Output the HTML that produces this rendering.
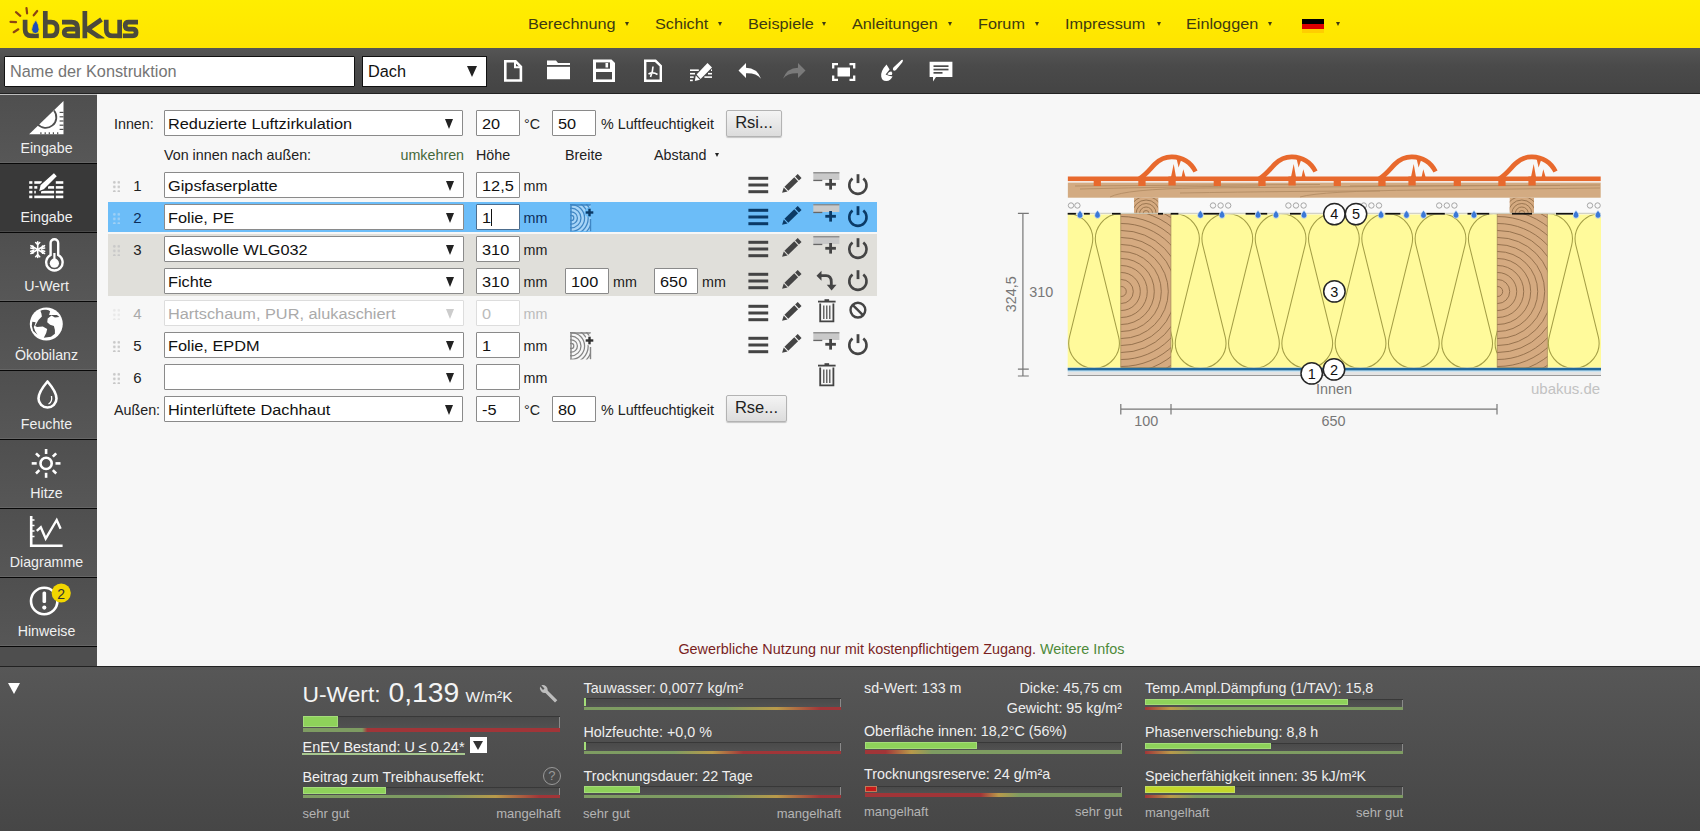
<!DOCTYPE html>
<html><head><meta charset="utf-8">
<style>
*{box-sizing:border-box;margin:0;padding:0}
html,body{width:1700px;height:831px;overflow:hidden;background:#f7f7f7;font-family:"Liberation Sans",sans-serif;color:#222}
.a{position:absolute}
#hdr{left:0;top:0;width:1700px;height:48px;background:linear-gradient(#ffee00,#ffe400)}
#hdr .m{position:absolute;top:16px;font-size:14.5px;line-height:1.15;color:#3e3a12;white-space:nowrap;transform-origin:0 50%;transform:scaleX(1.12)}
#hdr .t{position:absolute;top:22px;width:0;height:0;border-left:2.5px solid transparent;border-right:2.5px solid transparent;border-top:4px solid #3e3a12}
#tb{left:0;top:48px;width:1700px;height:46px;background:linear-gradient(#555 0,#4a4a4a 40%,#444 100%);border-bottom:1px solid #222}
#side{left:0;top:94px;width:97px;height:572px;background:#4e4e4e;border-top:1px solid #bdbdbd}
.si{position:absolute;left:0;width:97px;height:69px;background:linear-gradient(#4f4f4f,#575757);border-bottom:1px solid #080808;box-shadow:inset 0 -1px 0 #656565}
.si span{position:absolute;left:0;width:93px;text-align:center;top:45px;font-size:14.2px;color:#f0f0f0}
.si.act{background:#393939;box-shadow:inset 0 -1px 0 #4a4a4a}
#bot{left:0;top:666px;width:1700px;height:165px;background:linear-gradient(#575757,#464646)}
.lbl{position:absolute;font-size:14.4px;white-space:nowrap;color:#222}
.mm{position:absolute;font-size:15px;white-space:nowrap;color:#222}
.num{position:absolute;font-size:15px;color:#222;width:20px;text-align:center}
.btn{position:absolute;height:27px;border:1px solid #b3b3b3;border-radius:2px;background:linear-gradient(#f4f4f4,#dcdcdc);font-size:16px;text-align:center;line-height:25px;color:#222;box-shadow:0 1px 1px rgba(0,0,0,.2)}

.v{display:inline-block;transform-origin:0 50%;transform:scaleX(1.165)}
.sel,.inp{position:absolute;height:26px;background:#fff;border:1px solid #8a8a8a;border-radius:1px;white-space:nowrap;color:#111}
.sel .tx,.inp .tx{position:absolute;left:3px;top:5px;font-size:14px;line-height:16px}
.sel .ar{position:absolute;right:9.5px;top:8px;border-left:4.3px solid transparent;border-right:4.3px solid transparent;border-top:10px solid #222}
.lb{position:absolute;font-size:14.3px;line-height:16px;white-space:nowrap;color:#222}
.dots{position:absolute;width:8px;height:12px;background-image:radial-gradient(circle,#c8c8c8 1.2px,transparent 1.4px);background-size:4.6px 4.6px}
</style></head><body>
<div id="hdr" class="a">
<svg class="a" style="left:0;top:0" width="150" height="48" viewBox="0 0 150 48">
<defs><clipPath id="lc"><rect x="0" y="10.8" width="150" height="27.6"/></clipPath></defs>
<g stroke="#8c4612" stroke-width="2.2" stroke-linecap="round">
<line x1="10.5" y1="21.8" x2="16" y2="22.2"/><line x1="13.7" y1="32.2" x2="18.3" y2="29.3"/><line x1="16" y1="12.2" x2="20.3" y2="15.8"/><line x1="26.5" y1="8.2" x2="27.1" y2="13.3"/><line x1="37.2" y1="11" x2="33.7" y2="15.3"/></g>
<g fill="none" stroke="#4b4a3c" stroke-width="4.7" clip-path="url(#lc)">
<path d="M25.1,19.7 V29.5 Q25.1,35.85 31.5,35.85 H38.8"/>
<path d="M45.3,11 V35.85 H51 Q57.05,35.85 57.05,29.8 V28.1 Q57.05,22.05 51,22.05 H45.3"/>
<path d="M62,22.05 H71.5 Q77.6,22.05 77.6,28 V38.4 M77.6,29.2 H69.2 Q64.2,29.2 64.2,32.5 Q64.2,35.85 69.2,35.85 H77.6"/>
<path d="M84.85,11 V38.4 M101.5,19.5 L87.5,29.2 L103.5,40"/>
<path d="M106.25,19.7 V29.5 Q106.25,35.85 112.5,35.85 H119.65 M119.65,19.7 V38.4"/>
<path d="M138,22.05 H128.6 Q125.2,22.05 125.2,25.6 Q125.2,29.2 128.6,29.2 H132.6 Q136.1,29.2 136.1,32.5 Q136.1,35.85 132.6,35.85 H122.8"/>
</g>
<path d="M36,19.8 Q31.5,25.5 31.6,29.6 Q31.9,33.6 35.4,33.6 Q39.2,33.4 39.1,29.3 Q38.9,24.8 36,19.8Z" fill="#1c4db8" stroke="#ffe800" stroke-width="0.8"/>
</svg>
  <div class="m" style="left:528px">Berechnung</div><div class="t" style="left:625px"></div>
  <div class="m" style="left:655px">Schicht</div><div class="t" style="left:718px"></div>
  <div class="m" style="left:748px">Beispiele</div><div class="t" style="left:822px"></div>
  <div class="m" style="left:852px">Anleitungen</div><div class="t" style="left:948px"></div>
  <div class="m" style="left:978px">Forum</div><div class="t" style="left:1035px"></div>
  <div class="m" style="left:1065px">Impressum</div><div class="t" style="left:1157px"></div>
  <div class="m" style="left:1186px">Einloggen</div><div class="t" style="left:1268px"></div>
  <div class="a" style="left:1302px;top:19px;width:22px;height:5px;background:#000"></div>
  <div class="a" style="left:1302px;top:24px;width:22px;height:5px;background:#dd0000"></div>
  <div class="a" style="left:1302px;top:29px;width:22px;height:4px;background:#ffce00"></div>
  <div class="t" style="left:1336px"></div>
</div>
<div id="tb" class="a">
<div class="a" style="left:4px;top:8px;width:351px;height:31px;background:#fff;border:1px solid #111;border-radius:1px"></div>
<div class="a" style="left:10px;top:14px;font-size:16.3px;color:#757575;white-space:nowrap">Name der Konstruktion</div>
<div class="a" style="left:362px;top:8px;width:125px;height:31px;background:#fff;border:1px solid #111"></div>
<div class="a" style="left:368px;top:14px;font-size:16.3px;color:#111">Dach</div>
<div class="a" style="left:467px;top:18px;border-left:5.5px solid transparent;border-right:5.5px solid transparent;border-top:11px solid #222"></div>
<svg class="a" style="left:0;top:0" width="1000" height="47" viewBox="0 48 1000 47">
<g fill="none" stroke="#fff" stroke-width="2.6">
<path d="M505.3,61.3 H515.5 L520.9,66.7 V80.5 H505.3 Z"/>
<path d="M515,61.3 V67.2 H520.9" stroke-width="2"/>
</g>
<path d="M547,60.6 H556 L558,63 H570 V79.2 H547 Z M547,65.5 V66.5 H570 V65.5Z" fill="#fff"/>
<rect x="547" y="65" width="23" height="1.6" fill="#4a4a4a"/>
<path d="M593,59.6 H611.5 L615,63 V82 H593 Z" fill="#fff"/>
<rect x="596" y="62.4" width="14" height="6.3" fill="#4a4a4a"/><rect x="605.5" y="63" width="2.6" height="4.5" fill="#fff"/>
<rect x="596" y="72" width="16" height="7.4" fill="#4a4a4a"/>
<g fill="none" stroke="#fff" stroke-width="2.4">
<path d="M645.2,60.8 H655.5 L660.8,66 V80.8 H645.2 Z"/>
<path d="M650.5,77 Q653,71 653,66.5 M648.5,74 Q653,71.5 657.5,74.5" stroke-width="1.6"/>
</g>
<g fill="#fff">
<rect x="690" y="69.4" width="8.8" height="1.6"/>
<rect x="690" y="72.9" width="5" height="1.6"/><rect x="708" y="72.9" width="4" height="1.6"/>
<rect x="690" y="76.3" width="3.7" height="1.6"/><rect x="704.4" y="76.3" width="7.6" height="1.6"/>
<rect x="690" y="79.6" width="2.8" height="1.6"/><rect x="711" y="69.4" width="1" height="1.6"/>
<path d="M707.5,62.9 L712,67.4 L700.6,78.9 L696.6,74.5 Z"/>
<path d="M694.8,81 L695.8,75.6 L700,79.8 Z"/>
</g>
<path d="M738.5,70.5 L746,63 V67.8 Q757,68 761,78.7 Q756,72.8 746,73.3 V78 Z" fill="#fff"/>
<path d="M805.5,70.5 L798,63 V67.8 Q787,68 783,78.7 Q788,72.8 798,73.3 V78 Z" fill="#7a7a7a"/>
<g fill="none" stroke="#fff" stroke-width="2.3">
<path d="M833.2,68.5 V64.2 H838 M849.5,64.2 H854.2 V68.5 M854.2,75.5 V79.8 H849.5 M838,79.8 H833.2 V75.5"/>
</g>
<rect x="837.5" y="67.5" width="12.5" height="9" fill="#fff"/>
<path d="M902.6,59.8 Q903.6,60.6 902.2,62.6 L896,70 Q894.2,71.2 893.2,70.2 Q892.4,69.2 893.4,67.6 L900.4,61 Q901.8,59.4 902.6,59.8 Z" fill="#fff"/>
<path d="M886.5,64.6 Q880.6,71 881.2,76.5 Q882,81.2 886.5,81 Q890.6,80.6 892.6,76.4 Q888.8,76.4 885.6,74.6 L889.6,69.6 Z" fill="#fff"/>
<path d="M887.2,74.2 Q889.2,71.2 891.4,71.6 Q893,72.8 891.8,75 Q889.6,75.4 887.2,74.2 Z" fill="#fff"/>
<path d="M929.6,61.8 H952.4 V77 H936 L933,81.6 V77 H929.6 Z" fill="#fff"/>
<rect x="933.5" y="65.3" width="15" height="1.7" fill="#4a4a4a"/><rect x="933.5" y="68.7" width="15" height="1.7" fill="#4a4a4a"/><rect x="933.5" y="72" width="9" height="1.7" fill="#4a4a4a"/>
</svg>
</div>
<div id="side" class="a">
  <div class="si" style="top:0"><span>Eingabe</span></div>
  <div class="si act" style="top:69px"><span>Eingabe</span></div>
  <div class="si" style="top:138px"><span>U-Wert</span></div>
  <div class="si" style="top:207px"><span>Ökobilanz</span></div>
  <div class="si" style="top:276px"><span>Feuchte</span></div>
  <div class="si" style="top:345px"><span>Hitze</span></div>
  <div class="si" style="top:414px"><span>Diagramme</span></div>
  <div class="si" style="top:483px"><span>Hinweise</span></div>
<svg class="a" style="left:0;top:0" width="97" height="571" viewBox="0 95 97 571">
<path d="M29.1,134.3 L63.5,100.9 V134.3 Z" fill="#fff"/>
<path d="M37.5,124 A10.66,10.66 0 0 0 54,110.5" fill="none" stroke="#4f4f4f" stroke-width="1.8"/>
<g stroke="#4f4f4f" stroke-width="1.2">
<line x1="59.6" y1="112.4" x2="63.5" y2="112.4"/><line x1="59.6" y1="116.8" x2="63.5" y2="116.8"/><line x1="59.6" y1="121" x2="63.5" y2="121"/><line x1="59.6" y1="125.2" x2="63.5" y2="125.2"/><line x1="59.6" y1="129.4" x2="63.5" y2="129.4"/>
<line x1="40.9" y1="132.2" x2="40.9" y2="134.3"/><line x1="45.2" y1="132.2" x2="45.2" y2="134.3"/><line x1="49.3" y1="132.2" x2="49.3" y2="134.3"/><line x1="53.4" y1="132.2" x2="53.4" y2="134.3"/><line x1="57.7" y1="132.2" x2="57.7" y2="134.3"/>
</g>
<g fill="#fff">
<rect x="29.2" y="181.2" width="3.2" height="2.6"/><rect x="29.2" y="186.1" width="3.2" height="2.6"/><rect x="29.2" y="190.8" width="3.2" height="2.6"/><rect x="29.2" y="195.6" width="3.2" height="2.6"/>
<rect x="34.3" y="181.2" width="7.5" height="2.6"/><rect x="55.8" y="181.2" width="7.5" height="2.6"/>
<rect x="34.3" y="186.1" width="3" height="2.6"/><rect x="48" y="186.1" width="6.1" height="2.6"/><rect x="55.8" y="186.1" width="7.5" height="2.6"/>
<rect x="34.3" y="190.8" width="1.5" height="2.6"/><rect x="41" y="190.8" width="13.1" height="2.6"/><rect x="55.8" y="190.8" width="7.5" height="2.6"/>
<rect x="34.3" y="195.6" width="19.8" height="2.6"/><rect x="55.8" y="195.6" width="7.5" height="2.6"/>
<path d="M38.3,192 L40,184.8 L54,172.2 L57.7,176.2 L44.5,189.5 Z" stroke="#383838" stroke-width="1.3"/>
</g>
<g stroke="#fff" stroke-width="1.6" stroke-linecap="round">
<line x1="37.7" y1="241.8" x2="37.7" y2="257.4"/><line x1="30.9" y1="245.7" x2="44.5" y2="253.5"/><line x1="30.9" y1="253.5" x2="44.5" y2="245.7"/>
<path d="M35.7,242.5 L37.7,244.5 L39.7,242.5 M35.7,256.7 L37.7,254.7 L39.7,256.7 M30.8,248 L33.5,248.8 L32.8,246 M44.6,251.2 L41.9,250.4 L42.6,253.2 M30.8,251.2 L33.5,250.4 L32.8,253.2 M44.6,248 L41.9,248.8 L42.6,246" fill="none"/>
</g>
<path d="M50.6,255 V243 A3.8,3.8 0 0 1 58.2,243 V255 A8.2,8.2 0 1 1 50.6,255 Z" fill="none" stroke="#fff" stroke-width="2.4"/>
<circle cx="54.4" cy="263.2" r="4.6" fill="#fff"/><rect x="53.3" y="253" width="2.2" height="8" fill="#fff"/>
<circle cx="46.3" cy="324" r="16.5" fill="#fff"/>
<path d="M40.4,310.7 Q43,309.4 46.2,309.8 Q49,310.2 50.1,311.2 L49.1,315.1 L52,315.1 L56.8,315.1 Q58.6,316 59.2,317 L54.9,317.5 L51.5,315.6 L47.7,318.4 L47.2,322.3 L50.1,324.7 L53.9,326.1 L54.9,330 L54.9,333.8 L51,336.7 L43.8,337.7 L46.2,332.9 L47.2,329 L42.8,326.6 L37.1,327.1 L35.1,326.1 L36.6,323.3 L38.5,319.9 L41.9,316.5 L41.4,313.6 Z" fill="#4f4f4f"/>
<path d="M32.3,321.8 L35.6,322.3 L34.7,325.2 L33.7,327.1 L35.1,331 L37.6,334.8 L33.2,331 L31.8,325.7 Z" fill="#4f4f4f"/>
<path d="M47.5,381.5 Q38.5,392 38.5,398.5 A9,9 0 0 0 56.5,398.5 Q56.5,392 47.5,381.5 Z" fill="none" stroke="#fff" stroke-width="2.6" stroke-linejoin="round"/>
<path d="M51.5,396 Q52.5,402 48.5,404" fill="none" stroke="#fff" stroke-width="1.3"/>
<circle cx="46.1" cy="463.4" r="5.6" fill="none" stroke="#fff" stroke-width="2.6"/>
<g stroke="#fff" stroke-width="2.6">
<line x1="46.1" y1="449" x2="46.1" y2="454"/><line x1="46.1" y1="472.8" x2="46.1" y2="477.8"/><line x1="31.7" y1="463.4" x2="36.7" y2="463.4"/><line x1="55.5" y1="463.4" x2="60.5" y2="463.4"/>
<line x1="36" y1="453.3" x2="39.4" y2="456.7"/><line x1="52.8" y1="470.1" x2="56.2" y2="473.5"/><line x1="36" y1="473.5" x2="39.4" y2="470.1"/><line x1="52.8" y1="456.7" x2="56.2" y2="453.3"/>
</g>
<path d="M31.2,516 V545.7 H62.6" fill="none" stroke="#fff" stroke-width="2.6"/>
<g stroke="#fff" stroke-width="1.5"><line x1="31" y1="520" x2="34.5" y2="520"/><line x1="31" y1="525.5" x2="34.5" y2="525.5"/><line x1="31" y1="531" x2="34.5" y2="531"/><line x1="31" y1="536.5" x2="34.5" y2="536.5"/></g>
<path d="M36.8,530.8 L40.8,527.2 L45.7,538.5 L56.7,520 L60.6,528.8" fill="none" stroke="#fff" stroke-width="2.4" stroke-linejoin="miter"/>
<circle cx="44.2" cy="601" r="13.2" fill="none" stroke="#fff" stroke-width="2.6"/>
<rect x="42.5" y="591.5" width="3.6" height="11.5" rx="1.5" fill="#fff"/><circle cx="44.3" cy="607.6" r="2.1" fill="#fff"/>
<circle cx="61.2" cy="593" r="9.6" fill="#f2d600"/>
<text x="61.2" y="598.6" font-size="14" text-anchor="middle" fill="#333" font-family="Liberation Sans">2</text>
</svg>
</div>
<div id="form">
<div class="a" style="left:108px;top:202px;width:769px;height:30px;background:#6cbdf8"></div>
<div class="a" style="left:108px;top:234px;width:769px;height:62px;background:#e0dfda"></div>
<div class="lb" style="left:114px;top:116.0px;color:#222;font-size:14.3px">Innen:</div>
<div class="sel" style="left:164px;top:110px;width:299px;border-color:#8a8a8a;"><span class="tx" style="color:#111"><span class="v">Reduzierte Luftzirkulation</span></span><span class="ar" style="border-top-color:#222"></span></div>
<div class="inp" style="left:476px;top:110px;width:44px;border-color:#8a8a8a;"><span class="tx" style="left:5px;color:#111"><span class="v">20</span></span></div>
<div class="lb" style="left:524px;top:116.0px;color:#222;font-size:14.3px">°C</div>
<div class="inp" style="left:552px;top:110px;width:44px;border-color:#8a8a8a;"><span class="tx" style="left:5px;color:#111"><span class="v">50</span></span></div>
<div class="lb" style="left:601px;top:116.0px;color:#222;font-size:14.3px">% Luftfeuchtigkeit</div>
<div class="btn" style="left:726px;top:110px;width:56px;height:27px;font-size:16.5px;line-height:22px">Rsi...</div>
<div class="lb" style="left:164px;top:147.4px;color:#222;font-size:14.3px">Von innen nach außen:</div>
<div class="lb" style="left:400.5px;top:147.4px;color:#44683a;font-size:14.3px">umkehren</div>
<div class="lb" style="left:476px;top:147.4px;color:#222;font-size:14.3px">Höhe</div>
<div class="lb" style="left:565px;top:147.4px;color:#222;font-size:14.3px">Breite</div>
<div class="lb" style="left:654px;top:147.4px;color:#222;font-size:14.3px">Abstand</div>
<div class="a" style="left:715px;top:153px;border-left:2.5px solid transparent;border-right:2.5px solid transparent;border-top:4px solid #222"></div>
<div class="dots" style="left:112px;top:180px;background-image:radial-gradient(circle,#c8c8c8 1.2px,transparent 1.4px)"></div>
<div class="lb" style="left:130px;width:15px;text-align:center;top:177.5px;font-size:15px;color:#222">1</div>
<div class="sel" style="left:164px;top:172px;width:300px;border-color:#8a8a8a;"><span class="tx" style="color:#111"><span class="v">Gipsfaserplatte</span></span><span class="ar" style="border-top-color:#222"></span></div>
<div class="inp" style="left:476px;top:172px;width:44px;border-color:#8a8a8a;"><span class="tx" style="left:5px;color:#111"><span class="v">12,5</span></span></div>
<div class="lb" style="left:523.5px;top:177.5px;color:#222;font-size:14.3px">mm</div>
<div class="dots" style="left:112px;top:212px;background-image:radial-gradient(circle,#9fd0f5 1.2px,transparent 1.4px)"></div>
<div class="lb" style="left:130px;width:15px;text-align:center;top:209.5px;font-size:15px;color:#0b2d5a">2</div>
<div class="sel" style="left:164px;top:204px;width:300px;border-color:#8a8a8a;"><span class="tx" style="color:#111"><span class="v">Folie, PE</span></span><span class="ar" style="border-top-color:#222"></span></div>
<div class="inp" style="left:476px;top:204px;width:44px;border-color:#8a8a8a;border-color:#4d6d8d;"><span class="tx" style="left:5px;color:#111"><span class="v">1</span></span></div>
<div class="lb" style="left:523.5px;top:209.5px;color:#0b2d5a;font-size:14.3px">mm</div>
<div class="dots" style="left:112px;top:244px;background-image:radial-gradient(circle,#c8c8c8 1.2px,transparent 1.4px)"></div>
<div class="lb" style="left:130px;width:15px;text-align:center;top:241.5px;font-size:15px;color:#222">3</div>
<div class="sel" style="left:164px;top:236px;width:300px;border-color:#8a8a8a;"><span class="tx" style="color:#111"><span class="v">Glaswolle WLG032</span></span><span class="ar" style="border-top-color:#222"></span></div>
<div class="inp" style="left:476px;top:236px;width:44px;border-color:#8a8a8a;"><span class="tx" style="left:5px;color:#111"><span class="v">310</span></span></div>
<div class="lb" style="left:523.5px;top:241.5px;color:#222;font-size:14.3px">mm</div>
<div class="sel" style="left:164px;top:268px;width:300px;border-color:#8a8a8a;"><span class="tx" style="color:#111"><span class="v">Fichte</span></span><span class="ar" style="border-top-color:#222"></span></div>
<div class="inp" style="left:476px;top:268px;width:44px;border-color:#8a8a8a;"><span class="tx" style="left:5px;color:#111"><span class="v">310</span></span></div>
<div class="lb" style="left:523.5px;top:273.5px;color:#222;font-size:14.3px">mm</div>
<div class="dots" style="left:112px;top:308px;background-image:radial-gradient(circle,#e8e8e8 1.2px,transparent 1.4px)"></div>
<div class="lb" style="left:130px;width:15px;text-align:center;top:305.5px;font-size:15px;color:#aaa">4</div>
<div class="sel" style="left:164px;top:300px;width:300px;border-color:#ddd;"><span class="tx" style="color:#aaa"><span class="v">Hartschaum, PUR, alukaschiert</span></span><span class="ar" style="border-top-color:#ccc"></span></div>
<div class="inp" style="left:476px;top:300px;width:44px;border-color:#ddd;"><span class="tx" style="left:5px;color:#bbb"><span class="v">0</span></span></div>
<div class="lb" style="left:523.5px;top:305.5px;color:#bbb;font-size:14.3px">mm</div>
<div class="dots" style="left:112px;top:340px;background-image:radial-gradient(circle,#c8c8c8 1.2px,transparent 1.4px)"></div>
<div class="lb" style="left:130px;width:15px;text-align:center;top:337.5px;font-size:15px;color:#222">5</div>
<div class="sel" style="left:164px;top:332px;width:300px;border-color:#8a8a8a;"><span class="tx" style="color:#111"><span class="v">Folie, EPDM</span></span><span class="ar" style="border-top-color:#222"></span></div>
<div class="inp" style="left:476px;top:332px;width:44px;border-color:#8a8a8a;"><span class="tx" style="left:5px;color:#111"><span class="v">1</span></span></div>
<div class="lb" style="left:523.5px;top:337.5px;color:#222;font-size:14.3px">mm</div>
<div class="dots" style="left:112px;top:372px;background-image:radial-gradient(circle,#c8c8c8 1.2px,transparent 1.4px)"></div>
<div class="lb" style="left:130px;width:15px;text-align:center;top:369.5px;font-size:15px;color:#222">6</div>
<div class="sel" style="left:164px;top:364px;width:300px;border-color:#8a8a8a;"><span class="tx" style="color:#111"><span class="v"></span></span><span class="ar" style="border-top-color:#222"></span></div>
<div class="inp" style="left:476px;top:364px;width:44px;border-color:#8a8a8a;"><span class="tx" style="left:5px;color:#111"><span class="v"></span></span></div>
<div class="lb" style="left:523.5px;top:369.5px;color:#222;font-size:14.3px">mm</div>
<div class="a" style="left:491px;top:209px;width:1px;height:17px;background:#111"></div>
<div class="inp" style="left:565px;top:268px;width:44px;border-color:#8a8a8a;"><span class="tx" style="left:5px;color:#111"><span class="v">100</span></span></div>
<div class="lb" style="left:613px;top:273.5px;color:#222;font-size:14.3px">mm</div>
<div class="inp" style="left:654px;top:268px;width:44px;border-color:#8a8a8a;"><span class="tx" style="left:5px;color:#111"><span class="v">650</span></span></div>
<div class="lb" style="left:702px;top:273.5px;color:#222;font-size:14.3px">mm</div>
<div class="lb" style="left:114px;top:402.0px;color:#222;font-size:14.3px">Außen:</div>
<div class="sel" style="left:164px;top:396px;width:299px;border-color:#8a8a8a;"><span class="tx" style="color:#111"><span class="v">Hinterlüftete Dachhaut</span></span><span class="ar" style="border-top-color:#222"></span></div>
<div class="inp" style="left:476px;top:396px;width:44px;border-color:#8a8a8a;"><span class="tx" style="left:5px;color:#111"><span class="v">-5</span></span></div>
<div class="lb" style="left:524px;top:402.0px;color:#222;font-size:14.3px">°C</div>
<div class="inp" style="left:552px;top:396px;width:44px;border-color:#8a8a8a;"><span class="tx" style="left:5px;color:#111"><span class="v">80</span></span></div>
<div class="lb" style="left:601px;top:402.0px;color:#222;font-size:14.3px">% Luftfeuchtigkeit</div>
<div class="btn" style="left:726px;top:395px;width:61px;height:27px;font-size:16.5px;line-height:22px">Rse...</div>
<svg width="0" height="0" style="position:absolute">
<defs>
<g id="ham"><rect x="8.4" y="-8.2" width="19.8" height="3"/><rect x="8.4" y="-1.5" width="19.8" height="3"/><rect x="8.4" y="5.2" width="19.8" height="3"/></g>
<g id="pen"><g transform="translate(50.85,-0.6) rotate(-44)"><path d="M-12.2,0 L-7.2,-2.75 V2.75 Z"/><rect x="-6.2" y="-2.75" width="13.6" height="5.5"/><rect x="8.6" y="-2.75" width="3.6" height="5.5"/></g></g>
<g id="pow"><path d="M112.5,-6.4 A8.6,8.6 0 1 0 123.3,-6.4" fill="none" stroke-width="2.6" stroke="currentColor"/><rect x="116.6" y="-10.8" width="2.8" height="8.9"/></g>
<g id="lay"><rect x="73.3" y="-12.6" width="26.1" height="7.6" fill="#c9c9c9"/><rect x="73.3" y="-12.9" width="26.1" height="1.3" fill="#777" opacity=".8"/><rect x="73.3" y="-5.2" width="9" height="1.3" fill="#666"/><circle cx="90.6" cy="-1" r="6.5" fill="#f7f7f7" opacity=".0"/><rect x="85.3" y="-2.1" width="10.6" height="2.8"/><rect x="89.2" y="-6" width="2.8" height="10.6"/></g>
</defs></svg>
<svg class="a" style="left:740px;top:169px;color:#444" width="140" height="32" viewBox="0 -16 140 32" fill="#444"><use href="#ham"/><use href="#pen"/><use href="#lay"/><use href="#pow"/></svg>
<svg class="a" style="left:740px;top:201px;color:#0b3a66" width="140" height="32" viewBox="0 -16 140 32" fill="#0b3a66"><use href="#ham"/><use href="#pen"/><use href="#lay"/><use href="#pow"/></svg>
<svg class="a" style="left:740px;top:233px;color:#444" width="140" height="32" viewBox="0 -16 140 32" fill="#444"><use href="#ham"/><use href="#pen"/><use href="#lay"/><use href="#pow"/></svg>
<svg class="a" style="left:740px;top:265px;color:#444" width="140" height="32" viewBox="0 -16 140 32" fill="#444"><use href="#ham"/><use href="#pen"/><use href="#pow"/></svg>
<svg class="a" style="left:740px;top:329px;color:#444" width="140" height="32" viewBox="0 -16 140 32" fill="#444"><use href="#ham"/><use href="#pen"/><use href="#lay"/><use href="#pow"/></svg>
<svg class="a" style="left:740px;top:297px;color:#444" width="140" height="32" viewBox="0 -16 140 32" fill="#444"><use href="#ham"/><use href="#pen"/></svg>
<svg class="a" style="left:740px;top:265px" width="140" height="32" viewBox="0 -16 140 32" fill="#444">
<path d="M80,-5.3 H86 Q91.3,-5.3 91.3,1 V4.5" fill="none" stroke="#444" stroke-width="2.8"/>
<path d="M76.5,-5.3 L81.5,-10.3 V-0.3 Z"/><path d="M86.8,3.8 H96.5 L91.6,9.6 Z"/>
</svg>
<svg class="a" style="left:740px;top:296.5px" width="140" height="32" viewBox="0 -16 140 32" fill="#444">
<rect x="78" y="-12.3" width="17.6" height="1.8"/><rect x="84.5" y="-13.8" width="4.6" height="2"/>
<path d="M80.2,-9.5 V8.3 H93.4 V-9.5" fill="none" stroke="#444" stroke-width="1.8"/>
<rect x="83.2" y="-7.5" width="1.2" height="13.5"/><rect x="86.2" y="-7.5" width="1.2" height="13.5"/><rect x="89.2" y="-7.5" width="1.2" height="13.5"/>
</svg>
<svg class="a" style="left:740px;top:297.5px" width="140" height="32" viewBox="0 -16 140 32">
<circle cx="117.9" cy="-3.9" r="7.4" fill="none" stroke="#444" stroke-width="2.4"/><line x1="112.6" y1="-9.2" x2="123.2" y2="1.4" stroke="#444" stroke-width="2.4"/>
</svg>
<svg class="a" style="left:740px;top:361px" width="140" height="32" viewBox="0 -16 140 32" fill="#444">
<rect x="78" y="-12.3" width="17.6" height="1.8"/><rect x="84.5" y="-13.8" width="4.6" height="2"/>
<path d="M80.2,-9.5 V8.3 H93.4 V-9.5" fill="none" stroke="#444" stroke-width="1.8"/>
<rect x="83.2" y="-7.5" width="1.2" height="13.5"/><rect x="86.2" y="-7.5" width="1.2" height="13.5"/><rect x="89.2" y="-7.5" width="1.2" height="13.5"/>
</svg>
<svg class="a" style="left:570px;top:204px" width="30" height="28" viewBox="0 0 30 28">
<defs><clipPath id="wc204"><rect x="0" y="0" width="21" height="27.5"/></clipPath></defs><rect x="1" y="1" width="19.5" height="26" fill="#a6d4f7"/>
<g clip-path="url(#wc204)" fill="none" stroke="#3f86c4" stroke-width="1.25"><circle cx="1.2" cy="14" r="2.6"/><circle cx="1.2" cy="14" r="6.2"/><circle cx="1.2" cy="14" r="9.8"/><circle cx="1.2" cy="14" r="13.4"/><circle cx="1.2" cy="14" r="17"/><circle cx="1.2" cy="14" r="20.6"/><circle cx="1.2" cy="14" r="24.2"/></g>
<path d="M1,27 V1 H20.5 M20.5,15 V27" fill="none" stroke="#3f86c4" stroke-width="1.4"/>
<circle cx="19.5" cy="8.5" r="5" fill="#6cbdf8"/>
<rect x="15.7" y="7.3" width="7.6" height="2.4" fill="#0b3a66"/><rect x="18.3" y="4.7" width="2.4" height="7.6" fill="#0b3a66"/>
</svg>
<svg class="a" style="left:570px;top:332px" width="30" height="28" viewBox="0 0 30 28">
<defs><clipPath id="wc332"><rect x="0" y="0" width="21" height="27.5"/></clipPath></defs>
<g clip-path="url(#wc332)" fill="none" stroke="#858585" stroke-width="1.25"><circle cx="1.2" cy="14" r="2.6"/><circle cx="1.2" cy="14" r="6.2"/><circle cx="1.2" cy="14" r="9.8"/><circle cx="1.2" cy="14" r="13.4"/><circle cx="1.2" cy="14" r="17"/><circle cx="1.2" cy="14" r="20.6"/><circle cx="1.2" cy="14" r="24.2"/></g>
<path d="M1,27 V1 H20.5 M20.5,15 V27" fill="none" stroke="#858585" stroke-width="1.4"/>
<circle cx="19.5" cy="8.5" r="5" fill="#f7f7f7"/>
<rect x="15.7" y="7.3" width="7.6" height="2.4" fill="#333"/><rect x="18.3" y="4.7" width="2.4" height="7.6" fill="#333"/>
</svg>
</div>
<svg class="a" style="left:990px;top:140px" width="650" height="300" viewBox="990 140 650 300">
<defs><clipPath id="ins"><rect x="1067.7" y="214.5" width="533.3" height="153"/></clipPath>
<clipPath id="r1"><rect x="1120.8" y="213.7" width="50" height="153.7"/></clipPath><clipPath id="r2"><rect x="1497.2" y="213.7" width="50.1" height="153.7"/></clipPath>
<clipPath id="cb1"><rect x="1134" y="197.7" width="24.2" height="16"/></clipPath><clipPath id="cb2"><rect x="1509.7" y="197.7" width="24.3" height="16"/></clipPath>
<clipPath id="lat"><rect x="1067.7" y="182.6" width="533" height="15.1"/></clipPath></defs>
<rect x="1067.7" y="214.5" width="533.3" height="153" fill="#fffa9b"/>
<g clip-path="url(#ins)" fill="none" stroke="#a49e46" stroke-width="1.05"><path d="M936.22,245.01 A25.3,25.3 0 1 1 985.38,245.01 L962.87,336.99 A25.3,25.3 0 1 0 1012.03,336.99 L989.52,245.01 A25.3,25.3 0 1 1 1038.68,245.01 L1016.17,336.99 A25.3,25.3 0 1 0 1065.33,336.99 L1042.82,245.01 A25.3,25.3 0 1 1 1091.98,245.01 L1069.47,336.99 A25.3,25.3 0 1 0 1118.63,336.99 L1096.12,245.01 A25.3,25.3 0 1 1 1145.28,245.01 L1122.77,336.99 A25.3,25.3 0 1 0 1171.93,336.99 L1149.42,245.01 A25.3,25.3 0 1 1 1198.58,245.01 L1176.07,336.99 A25.3,25.3 0 1 0 1225.23,336.99 L1202.72,245.01 A25.3,25.3 0 1 1 1251.88,245.01 L1229.37,336.99 A25.3,25.3 0 1 0 1278.53,336.99 L1256.02,245.01 A25.3,25.3 0 1 1 1305.18,245.01 L1282.67,336.99 A25.3,25.3 0 1 0 1331.83,336.99 L1309.32,245.01 A25.3,25.3 0 1 1 1358.48,245.01 L1335.97,336.99 A25.3,25.3 0 1 0 1385.13,336.99 L1362.62,245.01 A25.3,25.3 0 1 1 1411.78,245.01 L1389.27,336.99 A25.3,25.3 0 1 0 1438.43,336.99 L1415.92,245.01 A25.3,25.3 0 1 1 1465.08,245.01 L1442.57,336.99 A25.3,25.3 0 1 0 1491.73,336.99 L1469.22,245.01 A25.3,25.3 0 1 1 1518.38,245.01 L1495.87,336.99 A25.3,25.3 0 1 0 1545.03,336.99 L1522.52,245.01 A25.3,25.3 0 1 1 1571.68,245.01 L1549.17,336.99 A25.3,25.3 0 1 0 1598.33,336.99 L1575.82,245.01 A25.3,25.3 0 1 1 1624.98,245.01 L1602.47,336.99 A25.3,25.3 0 1 0 1651.63,336.99 L1629.12,245.01 A25.3,25.3 0 1 1 1678.28,245.01 L1655.77,336.99 A25.3,25.3 0 1 0 1704.93,336.99 L1682.42,245.01 "/></g>
<rect x="1120.8" y="213.7" width="50.1" height="153.7" fill="#d5aa80" stroke="#a88a5c" stroke-width="0.8"/><g clip-path="url(#r1)" fill="none" stroke="#8f6c48" stroke-width="0.9"><circle cx="1121.3" cy="291.5" r="5"/><circle cx="1121.3" cy="291.5" r="12"/><circle cx="1121.3" cy="291.5" r="19"/><circle cx="1121.3" cy="291.5" r="26"/><circle cx="1121.3" cy="291.5" r="33"/><circle cx="1121.3" cy="291.5" r="40"/><circle cx="1121.3" cy="291.5" r="47"/><circle cx="1121.3" cy="291.5" r="54"/><circle cx="1121.3" cy="291.5" r="61"/><circle cx="1121.3" cy="291.5" r="68"/><circle cx="1121.3" cy="291.5" r="75"/><circle cx="1121.3" cy="291.5" r="82"/><circle cx="1121.3" cy="291.5" r="89"/><circle cx="1121.3" cy="291.5" r="96"/><circle cx="1121.3" cy="291.5" r="103"/></g>
<rect x="1497.2" y="213.7" width="50.1" height="153.7" fill="#d5aa80" stroke="#a88a5c" stroke-width="0.8"/><g clip-path="url(#r2)" fill="none" stroke="#8f6c48" stroke-width="0.9"><circle cx="1497.7" cy="291.5" r="5"/><circle cx="1497.7" cy="291.5" r="12"/><circle cx="1497.7" cy="291.5" r="19"/><circle cx="1497.7" cy="291.5" r="26"/><circle cx="1497.7" cy="291.5" r="33"/><circle cx="1497.7" cy="291.5" r="40"/><circle cx="1497.7" cy="291.5" r="47"/><circle cx="1497.7" cy="291.5" r="54"/><circle cx="1497.7" cy="291.5" r="61"/><circle cx="1497.7" cy="291.5" r="68"/><circle cx="1497.7" cy="291.5" r="75"/><circle cx="1497.7" cy="291.5" r="82"/><circle cx="1497.7" cy="291.5" r="89"/><circle cx="1497.7" cy="291.5" r="96"/><circle cx="1497.7" cy="291.5" r="103"/></g>
<rect x="1067.7" y="371" width="533.3" height="4.8" fill="#e4e4e4"/><rect x="1067.7" y="375" width="533.3" height="1" fill="#999"/>
<rect x="1067.7" y="370.3" width="533.3" height="1.2" fill="#aee0fa"/>
<rect x="1067.7" y="367.8" width="533.3" height="2.6" fill="#22689a"/>
<rect x="1067.7" y="197.7" width="533.3" height="16" fill="#f9f9f9"/>
<g fill="none" stroke="#a5a5a5" stroke-width="1"><circle cx="1071" cy="205.5" r="2.7"/><circle cx="1077.4" cy="205.5" r="2.7"/><circle cx="1213.0" cy="205.5" r="2.7"/><circle cx="1220.6" cy="205.5" r="2.7"/><circle cx="1228.2" cy="205.5" r="2.7"/><circle cx="1288.4" cy="205.5" r="2.7"/><circle cx="1296.0" cy="205.5" r="2.7"/><circle cx="1303.6" cy="205.5" r="2.7"/><circle cx="1363.8" cy="205.5" r="2.7"/><circle cx="1371.4" cy="205.5" r="2.7"/><circle cx="1379.0" cy="205.5" r="2.7"/><circle cx="1439.2" cy="205.5" r="2.7"/><circle cx="1446.8" cy="205.5" r="2.7"/><circle cx="1454.4" cy="205.5" r="2.7"/><circle cx="1590.0" cy="205.5" r="2.7"/><circle cx="1597.6" cy="205.5" r="2.7"/></g>
<rect x="1134" y="197.7" width="24.3" height="16" fill="#d5aa80"/>
<g clip-path="url(#cb1)" fill="none" stroke="#9a7650" stroke-width="1"><circle cx="1146.1" cy="213.5" r="3"/><circle cx="1146.1" cy="213.5" r="6.5"/><circle cx="1146.1" cy="213.5" r="10"/><circle cx="1146.1" cy="213.5" r="13.5"/><circle cx="1146.1" cy="213.5" r="17"/></g>
<rect x="1509.7" y="197.7" width="24.3" height="16" fill="#d5aa80"/>
<g clip-path="url(#cb2)" fill="none" stroke="#9a7650" stroke-width="1"><circle cx="1521.8" cy="213.5" r="3"/><circle cx="1521.8" cy="213.5" r="6.5"/><circle cx="1521.8" cy="213.5" r="10"/><circle cx="1521.8" cy="213.5" r="13.5"/><circle cx="1521.8" cy="213.5" r="17"/></g>
<rect x="1067.7" y="212.8" width="533.3" height="1" fill="#c9c9b9"/>
<g fill="#111"><rect x="1067.7" y="212.9" width="8.2" height="1.7"/><rect x="1084" y="212.9" width="5.8" height="1.7"/><rect x="1112" y="212.9" width="8.6" height="1.7"/><rect x="1158" y="212.9" width="5.0" height="1.7"/><rect x="1170.7" y="212.9" width="7.7" height="1.7"/><rect x="1203.4" y="212.9" width="16.4" height="1.7"/><rect x="1245.6" y="212.9" width="9.7" height="1.7"/><rect x="1259.6" y="212.9" width="7.6" height="1.7"/><rect x="1290" y="212.9" width="10.8" height="1.7"/><rect x="1325" y="212.9" width="10.0" height="1.7"/><rect x="1385.3" y="212.9" width="15.1" height="1.7"/><rect x="1426.4" y="212.9" width="18.4" height="1.7"/><rect x="1467.5" y="212.9" width="21.7" height="1.7"/><rect x="1512" y="212.9" width="20.0" height="1.7"/><rect x="1556" y="212.9" width="17.0" height="1.7"/></g>
<g fill="#3b78d6" stroke="#dfefff" stroke-width="0.6"><path d="M1080,210.4 Q1083,213.6 1082.8,215.4 A2.8,2.8 0 0 1 1077.2,215.4 Q1077,213.6 1080,210.4Z"/><path d="M1097.5,210.4 Q1100.5,213.6 1100.3,215.4 A2.8,2.8 0 0 1 1094.7,215.4 Q1094.5,213.6 1097.5,210.4Z"/><path d="M1200.4,210.4 Q1203.4,213.6 1203.2,215.4 A2.8,2.8 0 0 1 1197.6000000000001,215.4 Q1197.4,213.6 1200.4,210.4Z"/><path d="M1222,210.4 Q1225,213.6 1224.8,215.4 A2.8,2.8 0 0 1 1219.2,215.4 Q1219,213.6 1222,210.4Z"/><path d="M1258,210.4 Q1261,213.6 1260.8,215.4 A2.8,2.8 0 0 1 1255.2,215.4 Q1255,213.6 1258,210.4Z"/><path d="M1276,210.4 Q1279,213.6 1278.8,215.4 A2.8,2.8 0 0 1 1273.2,215.4 Q1273,213.6 1276,210.4Z"/><path d="M1304,210.4 Q1307,213.6 1306.8,215.4 A2.8,2.8 0 0 1 1301.2,215.4 Q1301,213.6 1304,210.4Z"/><path d="M1381,210.4 Q1384,213.6 1383.8,215.4 A2.8,2.8 0 0 1 1378.2,215.4 Q1378,213.6 1381,210.4Z"/><path d="M1406.5,210.4 Q1409.5,213.6 1409.3,215.4 A2.8,2.8 0 0 1 1403.7,215.4 Q1403.5,213.6 1406.5,210.4Z"/><path d="M1423.5,210.4 Q1426.5,213.6 1426.3,215.4 A2.8,2.8 0 0 1 1420.7,215.4 Q1420.5,213.6 1423.5,210.4Z"/><path d="M1456,210.4 Q1459,213.6 1458.8,215.4 A2.8,2.8 0 0 1 1453.2,215.4 Q1453,213.6 1456,210.4Z"/><path d="M1474,210.4 Q1477,213.6 1476.8,215.4 A2.8,2.8 0 0 1 1471.2,215.4 Q1471,213.6 1474,210.4Z"/><path d="M1576,210.4 Q1579,213.6 1578.8,215.4 A2.8,2.8 0 0 1 1573.2,215.4 Q1573,213.6 1576,210.4Z"/><path d="M1598,210.4 Q1601,213.6 1600.8,215.4 A2.8,2.8 0 0 1 1595.2,215.4 Q1595,213.6 1598,210.4Z"/></g>
<rect x="1067.7" y="182.6" width="533" height="15.1" fill="#d3ab82"/>
<g clip-path="url(#lat)" fill="none" stroke="#b08a62" stroke-width="0.9" opacity="0.9"><path d="M1075,186 Q1200,185 1320,184.5"/><path d="M1080,189 Q1180,186.5 1260,186"/><path d="M1110,197 Q1125,189 1200,188 Q1400,186 1600,185"/><path d="M1300,197 Q1320,191 1420,190 Q1520,189 1600,188"/><path d="M1350,186 Q1450,185.5 1560,185.5"/><path d="M1180,193 Q1300,191 1380,191"/></g>
<rect x="1067.7" y="176.5" width="533" height="4.6" fill="#e8692d"/>
<g fill="#e8692d"><rect x="1093.7" y="180" width="7.2" height="6" /><rect x="1138.3" y="180" width="7.3" height="6" /><rect x="1168.4" y="176.5" width="7.3" height="9" /><path d="M1171,177 L1173.7,164 L1176,177Z M1181.6,177 L1183.3,169.3 L1185.6,177Z M1176.3,157.5 L1178.6,167.5 L1181.8,158Z"/><path d="M1139.0,179 C1146.0,175 1150.0,169 1155.0,164 C1161.0,158.2 1167.0,156.8 1172.0,156.9 C1181.0,157.1 1190.0,161 1195.5,171.5" fill="none" stroke="#e8692d" stroke-width="4.7"/><rect x="1213.7" y="180" width="7.2" height="6" /><rect x="1258.3" y="180" width="7.3" height="6" /><rect x="1288.4" y="176.5" width="7.3" height="9" /><path d="M1291,177 L1293.7,164 L1296,177Z M1301.6,177 L1303.3,169.3 L1305.6,177Z M1296.3,157.5 L1298.6,167.5 L1301.8,158Z"/><path d="M1259.0,179 C1266.0,175 1270.0,169 1275.0,164 C1281.0,158.2 1287.0,156.8 1292.0,156.9 C1301.0,157.1 1310.0,161 1315.5,171.5" fill="none" stroke="#e8692d" stroke-width="4.7"/><rect x="1333.7" y="180" width="7.2" height="6" /><rect x="1378.3" y="180" width="7.3" height="6" /><rect x="1408.4" y="176.5" width="7.3" height="9" /><path d="M1411,177 L1413.7,164 L1416,177Z M1421.6,177 L1423.3,169.3 L1425.6,177Z M1416.3,157.5 L1418.6,167.5 L1421.8,158Z"/><path d="M1379.0,179 C1386.0,175 1390.0,169 1395.0,164 C1401.0,158.2 1407.0,156.8 1412.0,156.9 C1421.0,157.1 1430.0,161 1435.5,171.5" fill="none" stroke="#e8692d" stroke-width="4.7"/><rect x="1453.7" y="180" width="7.2" height="6" /><rect x="1498.3" y="180" width="7.3" height="6" /><rect x="1528.4" y="176.5" width="7.3" height="9" /><path d="M1531,177 L1533.7,164 L1536,177Z M1541.6,177 L1543.3,169.3 L1545.6,177Z M1536.3,157.5 L1538.6,167.5 L1541.8,158Z"/><path d="M1499.0,179 C1506.0,175 1510.0,169 1515.0,164 C1521.0,158.2 1527.0,156.8 1532.0,156.9 C1541.0,157.1 1550.0,161 1555.5,171.5" fill="none" stroke="#e8692d" stroke-width="4.7"/></g>
<rect x="990" y="140" width="77.5" height="60" fill="#f7f7f7"/><rect x="1601" y="140" width="39" height="80" fill="#f7f7f7"/>
<g stroke="#777" stroke-width="1.2" fill="none"><path d="M1022.9,213.3 V376 M1017.9,213.3 H1028.8 M1017.9,369.2 H1028.8 M1017.9,376 H1028.8"/><path d="M1120.8,409.1 H1497 M1120.8,404 V414.6 M1171,404 V414.6 M1497,404 V414.6"/></g>
<g font-family="Liberation Sans" font-size="14.4" fill="#777"><text x="1029.3" y="297.3">310</text><text transform="translate(1016.3,294.3) rotate(-90)" text-anchor="middle">324,5</text><text x="1146.2" y="426" text-anchor="middle">100</text><text x="1333.6" y="426" text-anchor="middle">650</text><text x="1334" y="393.8" text-anchor="middle">Innen</text></g>
<text x="1600.2" y="393.8" text-anchor="end" font-family="Liberation Sans" font-size="15" fill="#c2c2c2">ubakus.de</text>
<circle cx="1334.4" cy="214.1" r="10.7" fill="#fff" stroke="#262626" stroke-width="1.5"/><text x="1334.4" y="219.29999999999998" text-anchor="middle" font-family="Liberation Sans" font-size="14.5" fill="#111">4</text>
<circle cx="1356" cy="214.1" r="10.7" fill="#fff" stroke="#262626" stroke-width="1.5"/><text x="1356" y="219.29999999999998" text-anchor="middle" font-family="Liberation Sans" font-size="14.5" fill="#111">5</text>
<circle cx="1334.4" cy="291.4" r="10.7" fill="#fff" stroke="#262626" stroke-width="1.5"/><text x="1334.4" y="296.59999999999997" text-anchor="middle" font-family="Liberation Sans" font-size="14.5" fill="#111">3</text>
<circle cx="1311.7" cy="373.4" r="10.7" fill="#fff" stroke="#262626" stroke-width="1.5"/><text x="1311.7" y="378.59999999999997" text-anchor="middle" font-family="Liberation Sans" font-size="14.5" fill="#111">1</text>
<circle cx="1334" cy="369.4" r="10.7" fill="#fff" stroke="#262626" stroke-width="1.5"/><text x="1334" y="374.59999999999997" text-anchor="middle" font-family="Liberation Sans" font-size="14.5" fill="#111">2</text>
</svg>
<div class="a" style="left:678.4px;top:641px;font-size:14.4px;line-height:1.15;color:#7a1f1f;white-space:nowrap">Gewerbliche Nutzung nur mit kostenpflichtigem Zugang. <span style="color:#4e8a3a">Weitere Infos</span></div>
<div id="bot" class="a"></div>
<div class="a" style="left:0;top:666px;width:1700px;height:1px;background:#222"></div>
<div class="a" style="left:8px;top:683px;border-left:6.5px solid transparent;border-right:6.5px solid transparent;border-top:11px solid #fff"></div>
<div class="a" style="left:302.5px;top:681.0px;font-size:22.8px;line-height:1.15;color:#f4f4f4;white-space:nowrap;">U-Wert:</div>
<div class="a" style="left:388.5px;top:676.0px;font-size:28.3px;line-height:1.15;color:#f4f4f4;white-space:nowrap;">0,139</div>
<div class="a" style="left:465.5px;top:687.8px;font-size:15.4px;line-height:1.15;color:#f4f4f4;white-space:nowrap;">W/m²K</div>
<svg class="a" style="left:536px;top:683px" width="24" height="22" viewBox="0 0 24 22"><path d="M4,3.5 A5.2,5.2 0 0 0 9.5,10 L19,19.5 L21.3,17.2 L11.8,7.8 A5.2,5.2 0 0 0 5.3,2.2 L8.5,5.5 L7,7 Z" fill="#bdbdbd"/></svg>
<div class="a" style="left:303px;top:716px;width:257px;height:12px;border-top:1px solid #383838;background:linear-gradient(#4a4a4a,#515151)"></div><div class="a" style="left:559px;top:717px;width:1px;height:11px;background:#8a8a8a"></div><div class="a" style="left:303px;top:716px;width:35px;height:11px;background:#8ed25a;border:1px solid rgba(190,235,160,.45)"></div><div class="a" style="left:303px;top:728px;width:257px;height:4px;background:linear-gradient(90deg,#7e9c62 0%,#7e9c62 23%,#a13538 25%,#a13538 100%)"></div>
<div class="a" style="left:302.5px;top:738.7px;font-size:14.45px;line-height:1.15;color:#f2f2f2;white-space:nowrap;">EnEV Bestand: U ≤ 0.24*</div>
<div class="a" style="left:302px;top:753px;width:163px;height:2px;background:#a8c890"></div>
<div class="a" style="left:470px;top:737px;width:17px;height:16px;background:#fff"></div><div class="a" style="left:473px;top:741px;border-left:5.5px solid transparent;border-right:5.5px solid transparent;border-top:9px solid #333"></div>
<div class="a" style="left:302.5px;top:768.8px;font-size:14.3px;line-height:1.15;color:#f0f0f0;white-space:nowrap;">Beitrag zum Treibhauseffekt:</div>
<div class="a" style="left:542.5px;top:766.5px;width:18.5px;height:18.5px;border:1.5px solid #999;border-radius:50%;color:#999;font-size:13px;text-align:center;line-height:16px">?</div>
<div class="a" style="left:303px;top:787px;width:257px;height:8px;border-top:1px solid #383838;background:linear-gradient(#4a4a4a,#515151)"></div><div class="a" style="left:559px;top:788px;width:1px;height:7px;background:#8a8a8a"></div><div class="a" style="left:303px;top:787px;width:83px;height:7px;background:#8ed25a;border:1px solid rgba(190,235,160,.45)"></div><div class="a" style="left:303px;top:795px;width:257px;height:3px;background:linear-gradient(90deg,#7e9c62 0%,#7e9c62 55%,#b99a4a 75%,#a13538 92%,#a13538 100%)"></div>
<div class="a" style="left:302.5px;top:807.0px;font-size:13px;line-height:1.15;color:#b4b4b4;white-space:nowrap;">sehr gut</div>
<div class="a" style="right:1139.5px;top:807.0px;font-size:13px;line-height:1.15;color:#b4b4b4;white-space:nowrap;">mangelhaft</div>
<div class="a" style="left:583.5px;top:679.8px;font-size:14.3px;line-height:1.15;color:#eee;white-space:nowrap;">Tauwasser: 0,0077 kg/m²</div>
<div class="a" style="left:584px;top:698px;width:257px;height:9px;border-top:1px solid #383838;background:linear-gradient(#4a4a4a,#515151)"></div><div class="a" style="left:840px;top:699px;width:1px;height:8px;background:#8a8a8a"></div><div class="a" style="left:584px;top:698px;width:2px;height:8px;background:#8ed25a;border:1px solid rgba(190,235,160,.45)"></div><div class="a" style="left:584px;top:707px;width:257px;height:3px;background:linear-gradient(90deg,#7e9c62 0%,#7e9c62 55%,#b99a4a 75%,#a13538 92%,#a13538 100%)"></div>
<div class="a" style="left:583.5px;top:723.8px;font-size:14.3px;line-height:1.15;color:#eee;white-space:nowrap;">Holzfeuchte: +0,0 %</div>
<div class="a" style="left:584px;top:742px;width:257px;height:9px;border-top:1px solid #383838;background:linear-gradient(#4a4a4a,#515151)"></div><div class="a" style="left:840px;top:743px;width:1px;height:8px;background:#8a8a8a"></div><div class="a" style="left:584px;top:742px;width:2px;height:8px;background:#8ed25a;border:1px solid rgba(190,235,160,.45)"></div><div class="a" style="left:584px;top:751px;width:257px;height:3px;background:linear-gradient(90deg,#7e9c62 0%,#7e9c62 35%,#b99a4a 50%,#a13538 62%,#a13538 100%)"></div>
<div class="a" style="left:583.5px;top:767.8px;font-size:14.3px;line-height:1.15;color:#eee;white-space:nowrap;">Trocknungsdauer: 22 Tage</div>
<div class="a" style="left:584px;top:786px;width:257px;height:9px;border-top:1px solid #383838;background:linear-gradient(#4a4a4a,#515151)"></div><div class="a" style="left:840px;top:787px;width:1px;height:8px;background:#8a8a8a"></div><div class="a" style="left:584px;top:786px;width:56px;height:7px;background:#8ed25a;border:1px solid rgba(190,235,160,.45)"></div><div class="a" style="left:584px;top:795px;width:257px;height:3px;background:linear-gradient(90deg,#7e9c62 0%,#7e9c62 55%,#b99a4a 75%,#a13538 92%,#a13538 100%)"></div>
<div class="a" style="left:583px;top:806.5px;font-size:13px;line-height:1.15;color:#b4b4b4;white-space:nowrap;">sehr gut</div>
<div class="a" style="right:859px;top:806.5px;font-size:13px;line-height:1.15;color:#b4b4b4;white-space:nowrap;">mangelhaft</div>
<div class="a" style="left:864px;top:679.8px;font-size:14.3px;line-height:1.15;color:#eee;white-space:nowrap;">sd-Wert: 133 m</div>
<div class="a" style="right:578px;top:679.8px;font-size:14.3px;line-height:1.15;color:#eee;white-space:nowrap;">Dicke: 45,75 cm</div>
<div class="a" style="right:578px;top:699.8px;font-size:14.3px;line-height:1.15;color:#eee;white-space:nowrap;">Gewicht: 95 kg/m²</div>
<div class="a" style="left:864px;top:722.8px;font-size:14.3px;line-height:1.15;color:#eee;white-space:nowrap;">Oberfläche innen: 18,2°C (56%)</div>
<div class="a" style="left:865px;top:742px;width:257px;height:8px;border-top:1px solid #383838;background:linear-gradient(#4a4a4a,#515151)"></div><div class="a" style="left:1121px;top:743px;width:1px;height:7px;background:#8a8a8a"></div><div class="a" style="left:865px;top:742px;width:112px;height:7px;background:#8ed25a;border:1px solid rgba(190,235,160,.45)"></div><div class="a" style="left:865px;top:750px;width:257px;height:4px;background:linear-gradient(90deg,#a13538 0%,#a13538 8%,#b99a4a 18%,#7e9c62 26%,#7e9c62 100%)"></div>
<div class="a" style="left:864px;top:765.8px;font-size:14.3px;line-height:1.15;color:#eee;white-space:nowrap;">Trocknungsreserve: 24 g/m²a</div>
<div class="a" style="left:865px;top:786px;width:257px;height:7px;border-top:1px solid #383838;background:linear-gradient(#4a4a4a,#515151)"></div><div class="a" style="left:1121px;top:787px;width:1px;height:6px;background:#8a8a8a"></div><div class="a" style="left:865px;top:786px;width:12px;height:6px;background:#c81a1a;border:1px solid rgba(190,235,160,.45)"></div><div class="a" style="left:865px;top:793px;width:257px;height:4px;background:linear-gradient(90deg,#a13538 0%,#a13538 45%,#b99a4a 52%,#7e9c62 60%,#7e9c62 100%)"></div>
<div class="a" style="left:864px;top:804.5px;font-size:13px;line-height:1.15;color:#b4b4b4;white-space:nowrap;">mangelhaft</div>
<div class="a" style="right:578px;top:804.5px;font-size:13px;line-height:1.15;color:#b4b4b4;white-space:nowrap;">sehr gut</div>
<div class="a" style="left:1145px;top:680.3px;font-size:14.3px;line-height:1.15;color:#eee;white-space:nowrap;">Temp.Ampl.Dämpfung (1/TAV): 15,8</div>
<div class="a" style="left:1145px;top:699px;width:258px;height:8px;border-top:1px solid #383838;background:linear-gradient(#4a4a4a,#515151)"></div><div class="a" style="left:1402px;top:700px;width:1px;height:7px;background:#8a8a8a"></div><div class="a" style="left:1145px;top:699px;width:203px;height:6px;background:#8ed25a;border:1px solid rgba(190,235,160,.45)"></div><div class="a" style="left:1145px;top:707px;width:258px;height:3px;background:linear-gradient(90deg,#a13538 0%,#b99a4a 10%,#7e9c62 20%,#7e9c62 100%)"></div>
<div class="a" style="left:1145px;top:723.8px;font-size:14.3px;line-height:1.15;color:#eee;white-space:nowrap;">Phasenverschiebung: 8,8 h</div>
<div class="a" style="left:1145px;top:743px;width:258px;height:8px;border-top:1px solid #383838;background:linear-gradient(#4a4a4a,#515151)"></div><div class="a" style="left:1402px;top:744px;width:1px;height:7px;background:#8a8a8a"></div><div class="a" style="left:1145px;top:743px;width:126px;height:6px;background:#8ed25a;border:1px solid rgba(190,235,160,.45)"></div><div class="a" style="left:1145px;top:751px;width:258px;height:3px;background:linear-gradient(90deg,#a13538 0%,#b99a4a 10%,#7e9c62 20%,#7e9c62 100%)"></div>
<div class="a" style="left:1145px;top:767.5px;font-size:14.3px;line-height:1.15;color:#eee;white-space:nowrap;">Speicherfähigkeit innen: 35 kJ/m²K</div>
<div class="a" style="left:1145px;top:786px;width:258px;height:9px;border-top:1px solid #383838;background:linear-gradient(#4a4a4a,#515151)"></div><div class="a" style="left:1402px;top:787px;width:1px;height:8px;background:#8a8a8a"></div><div class="a" style="left:1145px;top:786px;width:90px;height:7px;background:#c4d62c;border:1px solid rgba(190,235,160,.45)"></div><div class="a" style="left:1145px;top:795px;width:258px;height:3px;background:linear-gradient(90deg,#a13538 0%,#b99a4a 10%,#7e9c62 20%,#7e9c62 100%)"></div>
<div class="a" style="left:1145px;top:805.6px;font-size:13px;line-height:1.15;color:#b4b4b4;white-space:nowrap;">mangelhaft</div>
<div class="a" style="right:297px;top:805.6px;font-size:13px;line-height:1.15;color:#b4b4b4;white-space:nowrap;">sehr gut</div>
</body></html>
